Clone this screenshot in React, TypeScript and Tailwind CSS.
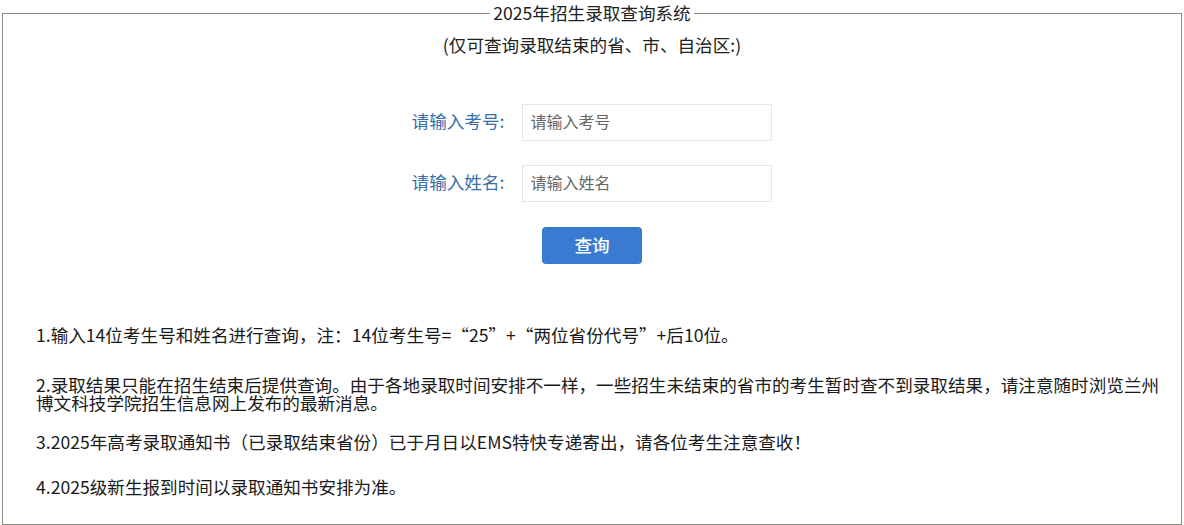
import { useState } from "react";

const NOTES = [
  "1.输入14位考生号和姓名进行查询，注：14位考生号=“25”+“两位省份代号”+后10位。",
  "2.录取结果只能在招生结束后提供查询。由于各地录取时间安排不一样，一些招生未结束的省市的考生暂时查不到录取结果，请注意随时浏览兰州博文科技学院招生信息网上发布的最新消息。",
  "3.2025年高考录取通知书（已录取结束省份）已于月日以EMS特快专递寄出，请各位考生注意查收！",
  "4.2025级新生报到时间以录取通知书安排为准。",
];

const NOTE_GAPS = ["mt-[62px]", "mt-[32px]", "mt-[21px]", "mt-[27px]"];

interface FieldRowProps {
  label: string;
  placeholder: string;
  value: string;
  onChange: (v: string) => void;
  className?: string;
}

const FieldRow = ({ label, placeholder, value, onChange, className }: FieldRowProps) => (
  <div className={`flex items-center justify-center gap-[18px] ${className ?? ""}`}>
    <label className="-mt-[3px] text-[17.6px] leading-6 text-[#3a6ea8]">{label}</label>
    <input
      value={value}
      onChange={(e) => onChange(e.target.value)}
      placeholder={placeholder}
      className="h-[37px] w-[250px] border border-[#e6e6e6] px-[7px] pb-[3px] text-[16px] text-[#333] outline-none placeholder:text-[#666]"
    />
  </div>
);

export default function App() {
  const [ksh, setKsh] = useState("");
  const [xm, setXm] = useState("");

  return (
    <div
      className="h-[525px] w-full bg-white pt-px"
      style={{ fontFamily: '"Noto Sans CJK SC", "Microsoft YaHei", sans-serif' }}
    >
      <fieldset className="mx-[2px] h-[524px] border border-[#8c8c87]">
        <legend className="mx-auto px-[3px] text-[17.6px] leading-6 text-[#222]">
          2025年招生录取查询系统
        </legend>

        <p className="mt-[8px] text-center text-[17.6px] leading-6 text-[#222]">
          (仅可查询录取结束的省、市、自治区:)
        </p>

        <form onSubmit={(e) => e.preventDefault()}>
          <FieldRow
            label="请输入考号:"
            placeholder="请输入考号"
            value={ksh}
            onChange={setKsh}
            className="mt-[47px]"
          />
          <FieldRow
            label="请输入姓名:"
            placeholder="请输入姓名"
            value={xm}
            onChange={setXm}
            className="mt-[24px]"
          />
          <div className="mt-[25px] flex justify-center">
            <button
              type="submit"
              className="h-[37px] w-[100px] rounded-[4px] bg-[#3a7bd2] text-[17.6px] font-medium text-white"
            >
              查询
            </button>
          </div>
        </form>

        <div className="pl-[33px] pr-[20px] text-[17.6px] leading-[18px] text-[#1a1a1a]">
          {NOTES.map((note, i) => (
            <p key={i} className={NOTE_GAPS[i]}>
              {note}
            </p>
          ))}
        </div>
      </fieldset>
    </div>
  );
}
